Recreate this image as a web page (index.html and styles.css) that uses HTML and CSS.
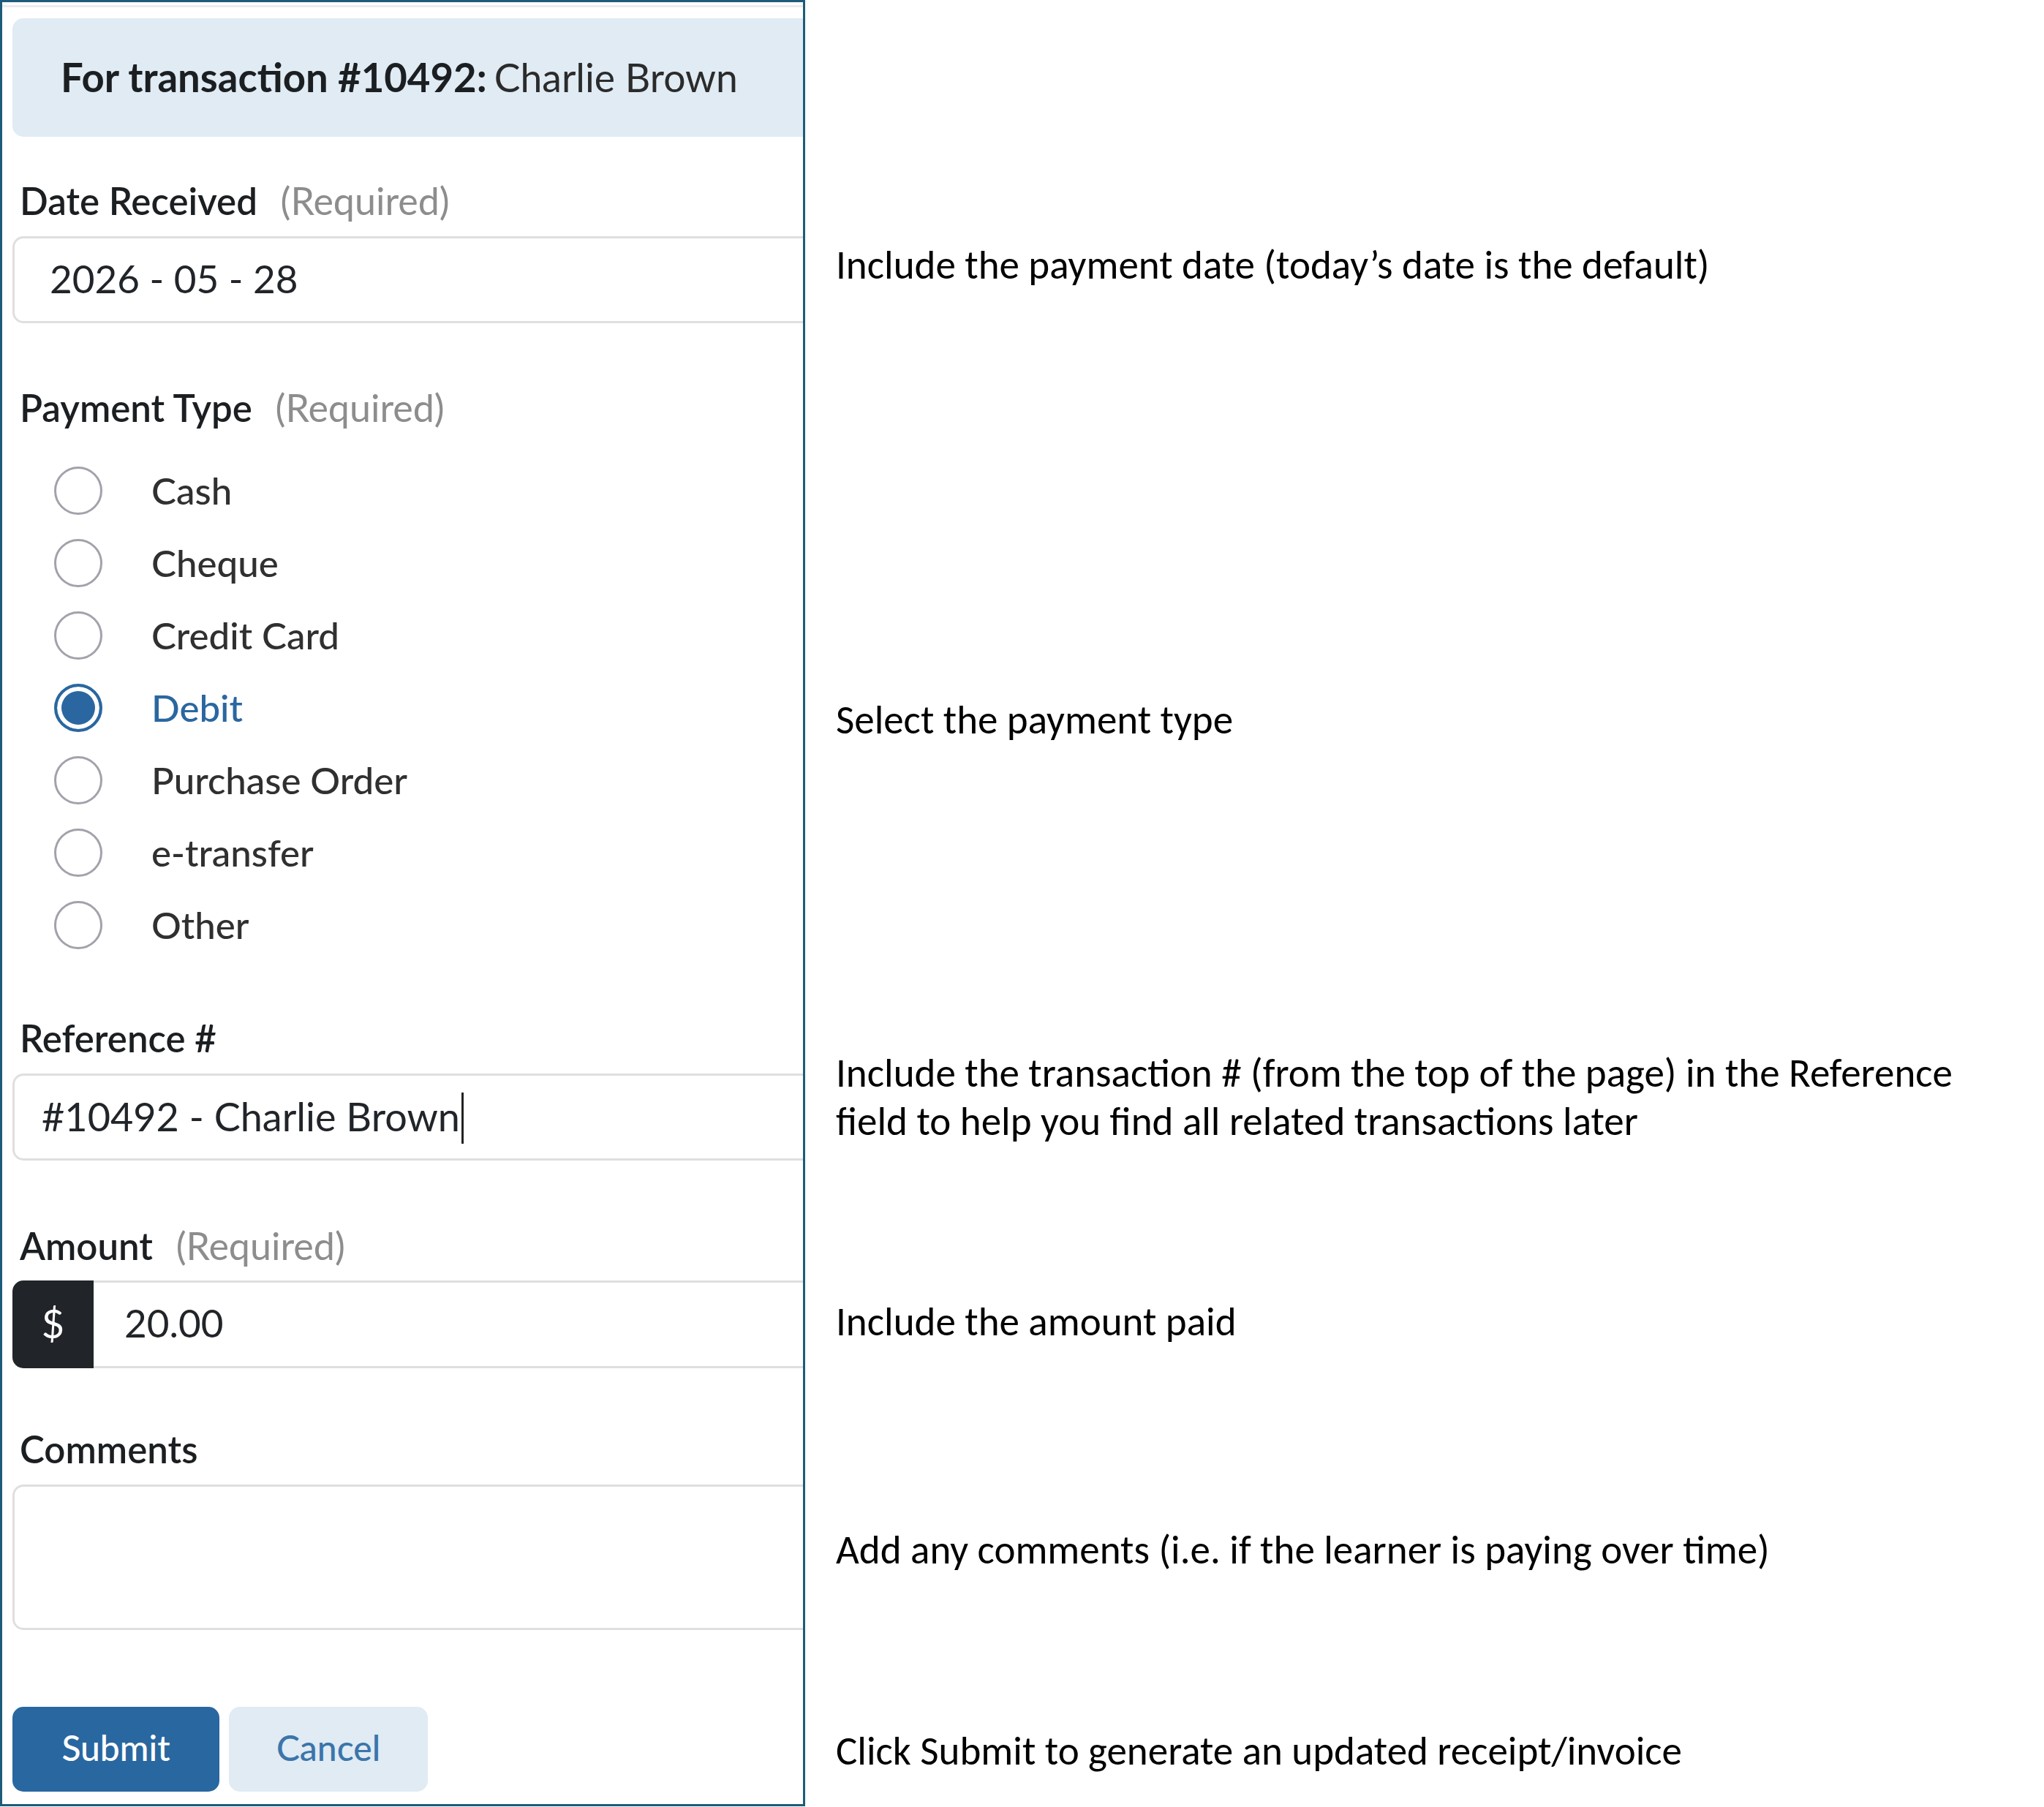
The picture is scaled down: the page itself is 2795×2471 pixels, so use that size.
FILE: index.html
```html
<!DOCTYPE html>
<html lang="en">
<head>
  <meta charset="UTF-8">
  <meta name="viewport" content="width=device-width, initial-scale=1.0">
  <title>Record a Payment</title>
  <link rel="stylesheet" href="styles.css">
</head>
<body>
  <div class="page">
    <!-- Payment form -->
    <form class="panel">
      <div class="panel-body">
        <div class="panel-head">
          <strong>For transaction #10492:</strong> <span>Charlie Brown</span>
        </div>

        <div class="field field-date">
          <div class="field-label">Date Received <span class="req">(Required)</span></div>
          <div class="control control-date">2026 - 05 - 28</div>
        </div>

        <div class="field">
          <div class="field-label">Payment Type <span class="req">(Required)</span></div>
          <div class="radio-list">
            <div class="radio"><span class="radio-dot"></span><span class="radio-text">Cash</span></div>
            <div class="radio"><span class="radio-dot"></span><span class="radio-text">Cheque</span></div>
            <div class="radio"><span class="radio-dot"></span><span class="radio-text">Credit Card</span></div>
            <div class="radio checked"><span class="radio-dot"></span><span class="radio-text">Debit</span></div>
            <div class="radio"><span class="radio-dot"></span><span class="radio-text">Purchase Order</span></div>
            <div class="radio"><span class="radio-dot"></span><span class="radio-text">e-transfer</span></div>
            <div class="radio"><span class="radio-dot"></span><span class="radio-text">Other</span></div>
          </div>
        </div>

        <div class="field field-ref">
          <div class="field-label">Reference #</div>
          <div class="control control-ref">#10492 - Charlie Brown<span class="caret"></span></div>
        </div>

        <div class="field field-amount">
          <div class="field-label">Amount <span class="req">(Required)</span></div>
          <div class="input-group">
            <span class="addon">$</span>
            <span class="group-value">20.00</span>
          </div>
        </div>

        <div class="field field-comments">
          <div class="field-label">Comments</div>
          <div class="control control-area"></div>
        </div>

        <div class="actions">
          <button type="button" class="btn btn-primary">Submit</button>
          <button type="button" class="btn btn-light">Cancel</button>
        </div>
      </div>
    </form>

    <!-- Help notes -->
    <div class="notes">
      <p class="note note-date">Include the payment date (today’s date is the default)</p>
      <p class="note note-type">Select the payment type</p>
      <p class="note note-ref">Include the transaction # (from the top of the page) in the Reference field to help you find all related transactions later</p>
      <p class="note note-amount">Include the amount paid</p>
      <p class="note note-comments">Add any comments (i.e. if the learner is paying over time)</p>
      <p class="note note-submit">Click Submit to generate an updated receipt/invoice</p>
    </div>
  </div>
</body>
</html>
```
FILE: styles.css
```css
/* Base */
body {
  margin: 0;
  background: #fff;
  font-family: "Lato", "Noto Sans", sans-serif;
  color: #212529;
}
.page {
  display: flex;
  align-items: flex-start;
}

/* Form panel */
.panel {
  box-sizing: border-box;
  width: 1101px;
  height: 2470px;
  margin: 0;
  padding-top: 4px;
  border: 3px solid #1e5b7a;
  overflow: hidden;
  flex-shrink: 0;
}
.panel-body {
  border-top: 3px solid #ececf0;
  padding: 15px 0 0 14px;
}
.panel-head {
  box-sizing: border-box;
  display: flex;
  align-items: center;
  gap: 10px;
  height: 162px;
  margin-right: -40px;
  padding: 0 0 3px 66px;
  background: #e0ebf4;
  border-radius: 15px;
  font-size: 53.5px;
  color: #2b2b2b;
}
.panel-head strong {
  font-size: 54.5px;
  font-weight: 700;
  color: #1c1f22;
}

.field {
  margin-top: 85px;
}
.field-date {
  margin-top: 57px;
}
.field-ref {
  margin-top: 76px;
}
.field-amount {
  margin-top: 86px;
}
.field-amount .field-label {
  margin-bottom: 17px;
}
.field-comments {
  margin-top: 81px;
}
.field-label {
  margin: 0 0 18px 10px;
  font-size: 51px;
  line-height: 60px;
  font-weight: 600;
  color: #1c1f22;
}
.req {
  margin-left: 19px;
  font-size: 52px;
  font-weight: 400;
  color: #8d8d8d;
}

/* Text controls */
.control {
  box-sizing: border-box;
  display: flex;
  align-items: center;
  height: 119px;
  margin-right: -60px;
  padding-bottom: 5px;
  border: 3px solid #dfdfdf;
  border-radius: 15px;
  font-size: 53px;
  color: #212529;
}
.control-date {
  padding-left: 48px;
}
.control-ref {
  padding: 0 0 2px 37px;
  font-size: 54px;
}
.caret {
  width: 3px;
  height: 70px;
  margin: 4px 0 0 2px;
  background: #222;
}
.control-area {
  height: 199px;
}

/* Amount */
.input-group {
  display: flex;
  height: 120px;
  margin-right: -60px;
}
.addon {
  display: flex;
  align-items: center;
  justify-content: center;
  width: 111px;
  padding-bottom: 3px;
  background: #212529;
  border-radius: 15px 0 0 15px;
  color: #fff;
  font-size: 54px;
}
.group-value {
  box-sizing: border-box;
  display: flex;
  align-items: center;
  flex: 1;
  padding: 0 0 6px 42px;
  border: 3px solid #dfdfdf;
  border-left: none;
  font-size: 53px;
}

/* Radios */
.radio-list {
  margin-top: 33px;
}
.radio {
  display: flex;
  align-items: center;
  height: 99px;
  padding-left: 57px;
}
.radio-dot {
  box-sizing: border-box;
  width: 66px;
  height: 66px;
  border: 3px solid #a2a2ab;
  border-radius: 50%;
  background: #fff;
}
.radio-text {
  margin-left: 67px;
  font-size: 51px;
  line-height: 60px;
  font-weight: 500;
  color: #303030;
}
.radio.checked .radio-dot {
  border: 4px solid #2a67a0;
  background: #2a67a0;
  box-shadow: inset 0 0 0 6px #fff;
}
.radio.checked .radio-text {
  color: #2a67a0;
}

/* Buttons */
.actions {
  display: flex;
  gap: 13px;
  margin-top: 105px;
}
.btn {
  height: 116px;
  padding-bottom: 6px;
  border: none;
  border-radius: 15px;
  font-family: inherit;
  font-size: 48px;
  font-weight: 500;
}
.btn-primary {
  width: 283px;
  background: #2967a0;
  color: #fff;
}
.btn-light {
  width: 272px;
  background: #e0ebf4;
  color: #3b75aa;
}

/* Notes column */
.notes {
  margin-left: 42px;
  font-family: "Carlito", "Lato", sans-serif;
  font-size: 55px;
  line-height: 66px;
  color: #000;
}
.note {
  margin: 0;
}
.note-date {
  margin-top: 330px;
}
.note-type {
  margin-top: 556px;
}
.note-ref {
  margin-top: 417px;
  max-width: 1560px;
}
.note-amount {
  margin-top: 208px;
}
.note-comments {
  margin-top: 246px;
}
.note-submit {
  margin-top: 209px;
}
```
